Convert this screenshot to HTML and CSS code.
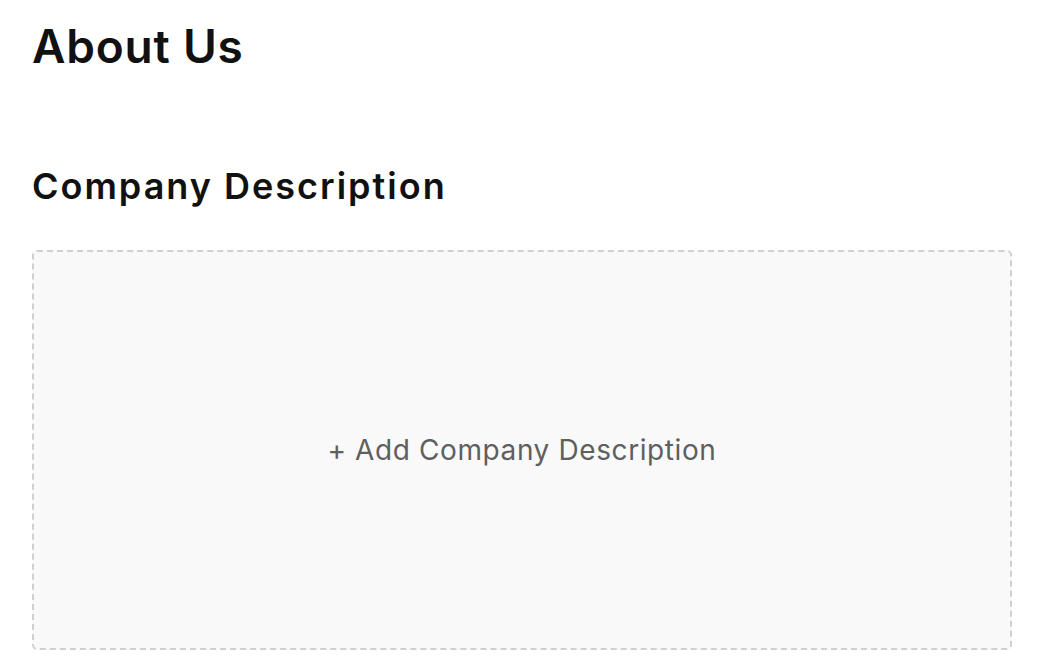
FILE: index.html
```html
<!DOCTYPE html>
<html lang="en">
<head>
  <meta charset="UTF-8">
  <title>About Us</title>
  <link rel="stylesheet" href="styles.css">
</head>
<body>

  <div class="page">
    <h1>About Us</h1>

    <section class="section">
      <h2>Company Description</h2>

      <div class="add-box">
        <span class="add-label">+ Add Company Description</span>
      </div>
    </section>
  </div>

</body>
</html>
```

FILE: styles.css
```css
body {
  margin: 0;
  background: #fff;
  color: #111;
  font-family: Inter, "Noto Sans", sans-serif;
}

.page {
  padding: 18px 34px 0 32px;
}

h1 {
  font-size: 46px;
  font-weight: 600;
  margin: 0;
  line-height: 56px;
  letter-spacing: 0.8px;
}

.section {
  margin-top: 91px;
}

h2 {
  font-size: 36px;
  font-weight: 600;
  margin: 0;
  line-height: 42px;
  letter-spacing: 2px;
}

.add-box {
  margin-top: 43px;
  height: 396px;
  background: #f9f9f9;
  border: 2px dashed #d0d0d0;
  border-radius: 5px;
  display: flex;
  align-items: center;
  justify-content: center;
  cursor: pointer;
}

.add-label {
  font-size: 28px;
  color: #5f5f5f;
  letter-spacing: 0.6px;
}
```
